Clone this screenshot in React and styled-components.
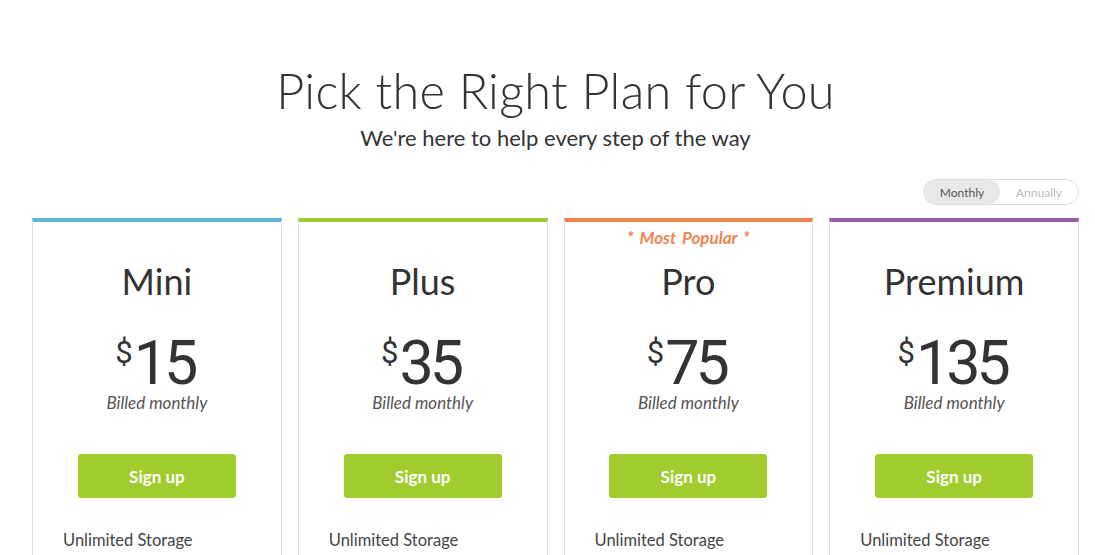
import React from "react";
import styled, { createGlobalStyle } from "styled-components";

const GlobalStyle = createGlobalStyle`
  html, body { margin: 0; padding: 0; background: #fff; }
  body { font-family: Lato, "Open Sans", sans-serif; color: #333; }
`;

const Page = styled.div`
  width: 1095px;
  height: 555px;
  overflow: hidden;
  box-sizing: border-box;
  padding: 0 16px 0 32px;
`;

const Header = styled.header`
  display: flex;
  flex-direction: column;
  align-items: center;
  padding-top: 60px;
`;

const Title = styled.h1`
  margin: 0;
  font-family: Lato, sans-serif;
  font-weight: 300;
  font-size: 48.6px;
  line-height: 60px;
  color: #333;
  letter-spacing: 0.3px;
`;

const Subtitle = styled.p`
  margin: 4px 0 0;
  font-family: Lato, sans-serif;
  font-size: 22px;
  line-height: 28px;
  color: #333;
`;

const ToggleRow = styled.div`
  display: flex;
  justify-content: flex-end;
  margin-top: 27px;
`;

const Toggle = styled.div`
  display: flex;
  border: 1px solid #ddd;
  border-radius: 13px;
  height: 24px;
  width: 154px;
  overflow: hidden;
`;

const ToggleOption = styled.div`
  flex: ${p => (p.$active ? "0 0 76px" : "1")};
  display: flex;
  align-items: center;
  justify-content: center;
  font-size: 12px;
  font-family: Lato, sans-serif;
  color: ${p => (p.$active ? "#555" : "#bbb")};
  background: ${p => (p.$active ? "#e8e8e8" : "transparent")};
  border-radius: 13px;
`;

const Grid = styled.div`
  display: grid;
  grid-template-columns: repeat(4, 1fr);
  gap: 16px;
  margin-top: 13px;
`;

const Card = styled.div`
  border: 1px solid #dcdcdc;
  border-top: 4px solid ${p => p.$color};
  border-bottom: none;
  height: 400px;
  display: flex;
  flex-direction: column;
  align-items: center;
  position: relative;
`;

const Popular = styled.div`
  position: absolute;
  top: 5px;
  left: 0;
  right: 0;
  text-align: center;
  font-family: Lato, sans-serif;
  font-style: italic;
  font-weight: 700;
  font-size: 17px;
  color: #ef8550;
  word-spacing: 2px;
`;

const Name = styled.h2`
  margin: 37px 0 0;
  font-family: Lato, sans-serif;
  font-weight: 400;
  font-size: 36px;
  line-height: 44px;
  color: #333;
`;

const Price = styled.div`
  margin-top: 30px;
  display: flex;
  align-items: flex-start;
  font-family: Roboto, sans-serif;
  color: #333;
`;

const Currency = styled.span`
  font-size: 31px;
  line-height: 36px;
  margin-top: 2px;
  margin-right: 1px;
`;

const Amount = styled.span`
  font-size: 61px;
  line-height: 60px;
  letter-spacing: -4px;
  padding-right: 4px;
`;

const Billed = styled.div`
  font-family: Lato, sans-serif;
  font-style: italic;
  font-size: 17px;
  line-height: 20px;
  color: #555;
  margin-top: 0;
`;

const Button = styled.button`
  margin-top: 41px;
  width: 158px;
  height: 44px;
  border: none;
  border-radius: 3px;
  background: #a0cd2d;
  color: #fff;
  font-family: Lato, sans-serif;
  font-weight: 700;
  font-size: 17px;
  cursor: pointer;
`;

const Feature = styled.div`
  align-self: stretch;
  padding-left: 30px;
  margin-top: 32px;
  font-family: Lato, sans-serif;
  font-size: 16.5px;
  color: #444;
`;

const plans = [
  { name: "Mini", price: "15", color: "#62b6d5" },
  { name: "Plus", price: "35", color: "#9fcc35" },
  { name: "Pro", price: "75", color: "#ed844f", popular: true },
  { name: "Premium", price: "135", color: "#9b5ba9" },
];

export default function App() {
  return (
    <>
      <GlobalStyle />
      <Page>
        <Header>
          <Title>Pick the Right Plan for You</Title>
          <Subtitle>We're here to help every step of the way</Subtitle>
        </Header>
        <ToggleRow>
          <Toggle>
            <ToggleOption $active>Monthly</ToggleOption>
            <ToggleOption>Annually</ToggleOption>
          </Toggle>
        </ToggleRow>
        <Grid>
          {plans.map(p => (
            <Card key={p.name} $color={p.color}>
              {p.popular && <Popular>* Most Popular *</Popular>}
              <Name>{p.name}</Name>
              <Price>
                <Currency>$</Currency>
                <Amount>{p.price}</Amount>
              </Price>
              <Billed>Billed monthly</Billed>
              <Button>Sign up</Button>
              <Feature>Unlimited Storage</Feature>
            </Card>
          ))}
        </Grid>
      </Page>
    </>
  );
}
